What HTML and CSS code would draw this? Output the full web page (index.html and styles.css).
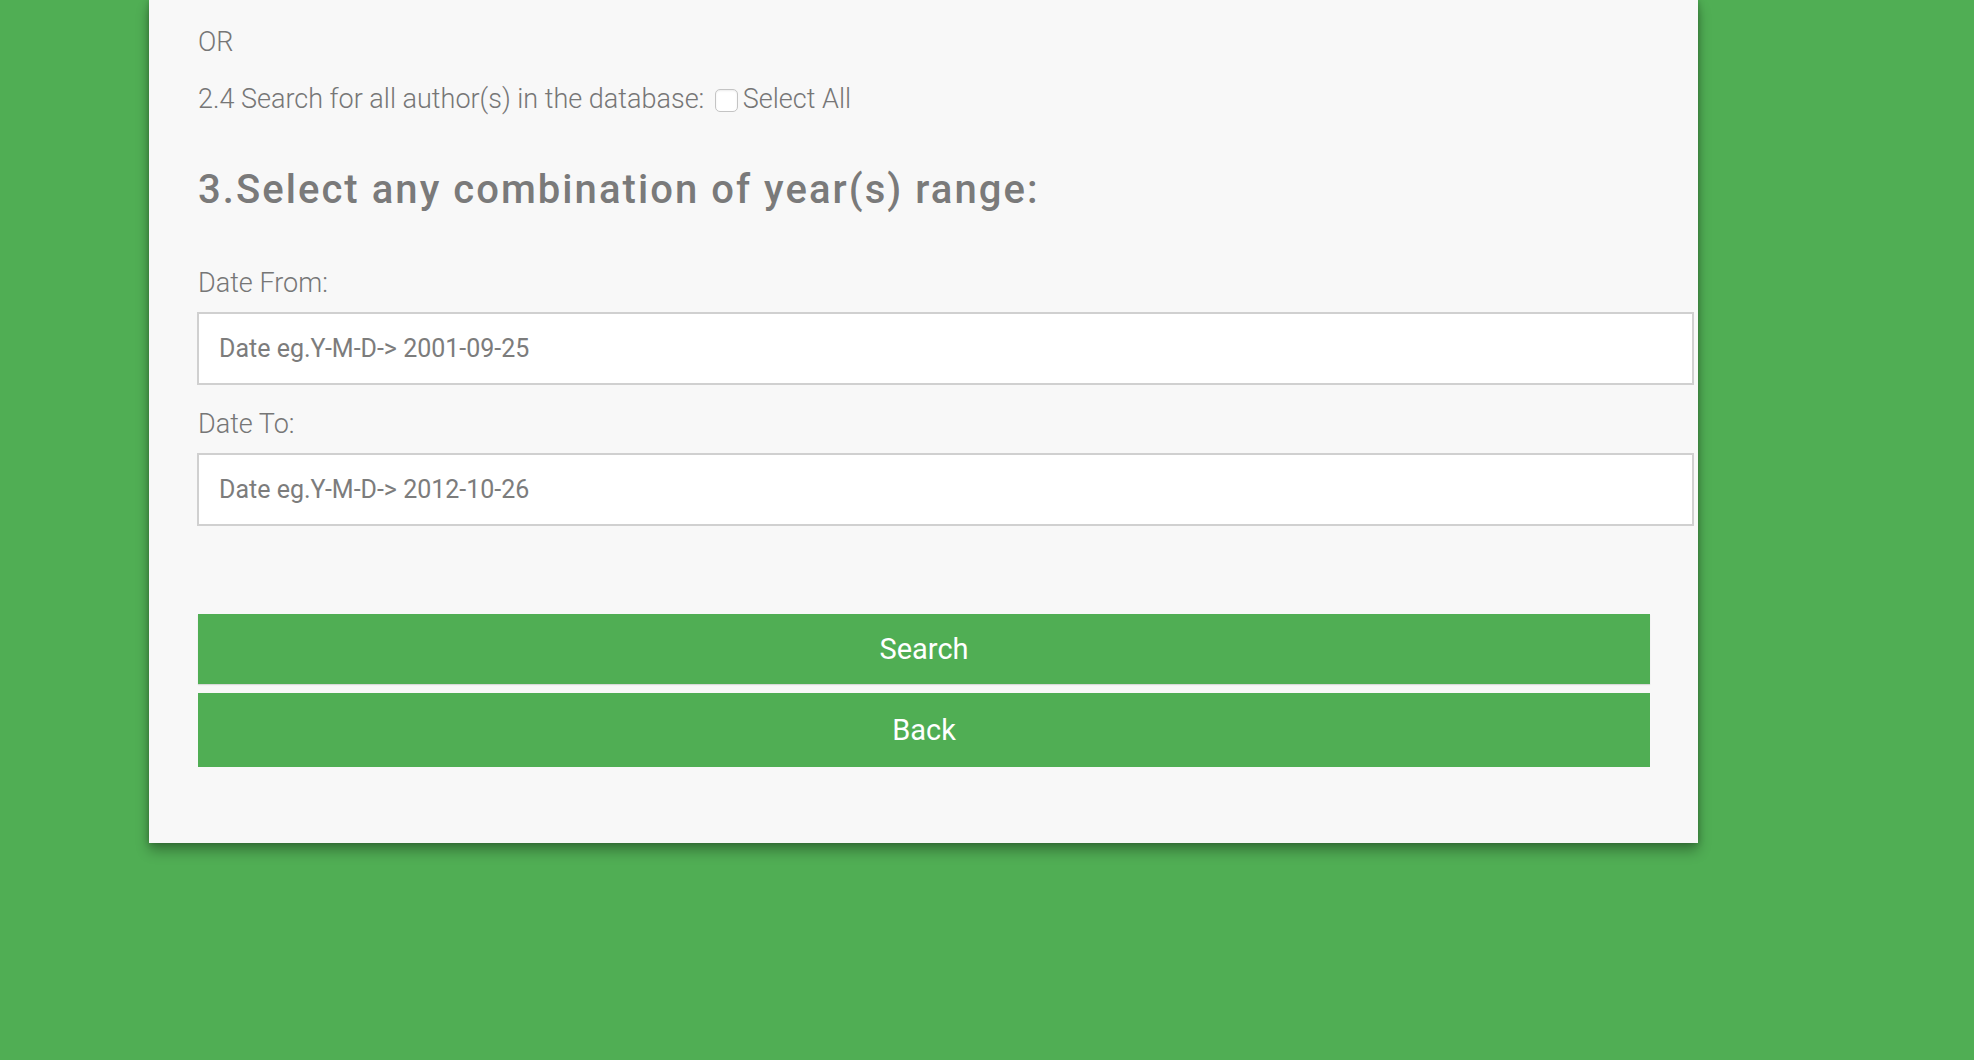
FILE: index.html
```html
<!DOCTYPE html>
<html lang="en">
<head>
<meta charset="utf-8">
<title>Search</title>
<link rel="stylesheet" href="styles.css">
</head>
<body>
<main class="card">
  <p class="line or">OR</p>
  <p class="line all-authors">2.4 Search for all author(s) in the database: <label class="check"><input type="checkbox" class="box">Select All</label></p>
  <h2 class="heading">3.Select any combination of year(s) range:</h2>
  <label class="line field-label" for="from">Date From:</label>
  <input id="from" class="date-input" type="text" placeholder="Date eg.Y-M-D-&gt; 2001-09-25">
  <label class="line field-label" for="to">Date To:</label>
  <input id="to" class="date-input" type="text" placeholder="Date eg.Y-M-D-&gt; 2012-10-26">
  <div class="actions">
    <button class="btn btn-search" type="button">Search</button>
    <a class="btn btn-back" href="#">Back</a>
  </div>
</main>
</body>
</html>
```
FILE: styles.css
```css
html, body {
  margin: 0;
  padding: 0;
}
body {
  background: #50ae54;
  font-family: Roboto, "Liberation Sans", sans-serif;
  height: 1060px;
  overflow: hidden;
}
.card {
  box-sizing: border-box;
  width: 1549px;
  margin-left: 149px;
  background: #f8f8f8;
  padding: 24px 48px 76px 49px;
  box-shadow: 0 8px 12px rgba(0, 0, 0, 0.3), 0 0 6px rgba(0, 0, 0, 0.25);
  display: flex;
  flex-direction: column;
  align-items: flex-start;
}
.line {
  margin: 0;
  font-size: 27px;
  line-height: 36px;
  font-weight: 300;
  color: #767676;
}
.all-authors {
  margin-top: 21px;
  display: flex;
  align-items: center;
  white-space: pre;
}
.check {
  display: flex;
  align-items: center;
}
.box {
  appearance: none;
  -webkit-appearance: none;
  width: 23px;
  height: 23px;
  margin: 3px 5px 0 4px;
  border: 1px solid #c4c4c4;
  border-radius: 5px;
  background: #fff;
  box-shadow: inset 0 1px 2px rgba(0, 0, 0, 0.08);
}
.heading {
  margin: 49px 0 0;
  font-size: 40px;
  line-height: 48px;
  font-weight: 500;
  letter-spacing: 2.05px;
  color: #7a7a7a;
}
.field-label {
  margin-top: 51px;
}
.field-label + .date-input {
  margin-top: 11px;
}
.date-input + .field-label {
  margin-top: 21px;
}
.date-input {
  box-sizing: border-box;
  width: 1497px;
  height: 73px;
  margin-left: -1px;
  border: 2px solid #d0d0d0;
  background: #fff;
  padding: 0 20px;
  font-family: Roboto, "Liberation Sans", sans-serif;
  font-size: 25px;
  color: #555;
  outline: none;
}
.date-input::placeholder {
  color: #7c7c7c;
}
.actions {
  margin-top: 88px;
  width: 1452px;
  display: flex;
  flex-direction: column;
  gap: 9px;
}
.btn {
  display: flex;
  align-items: center;
  justify-content: center;
  box-sizing: border-box;
  width: 100%;
  border: none;
  background: #50ae54;
  color: #fff;
  font-family: Roboto, "Liberation Sans", sans-serif;
  font-size: 29px;
  font-weight: 400;
  text-decoration: none;
  padding: 0;
}
.btn-search {
  height: 70px;
  box-shadow: 0 1px 1px rgba(0, 0, 0, 0.12);
}
.btn-back {
  height: 74px;
}
```
